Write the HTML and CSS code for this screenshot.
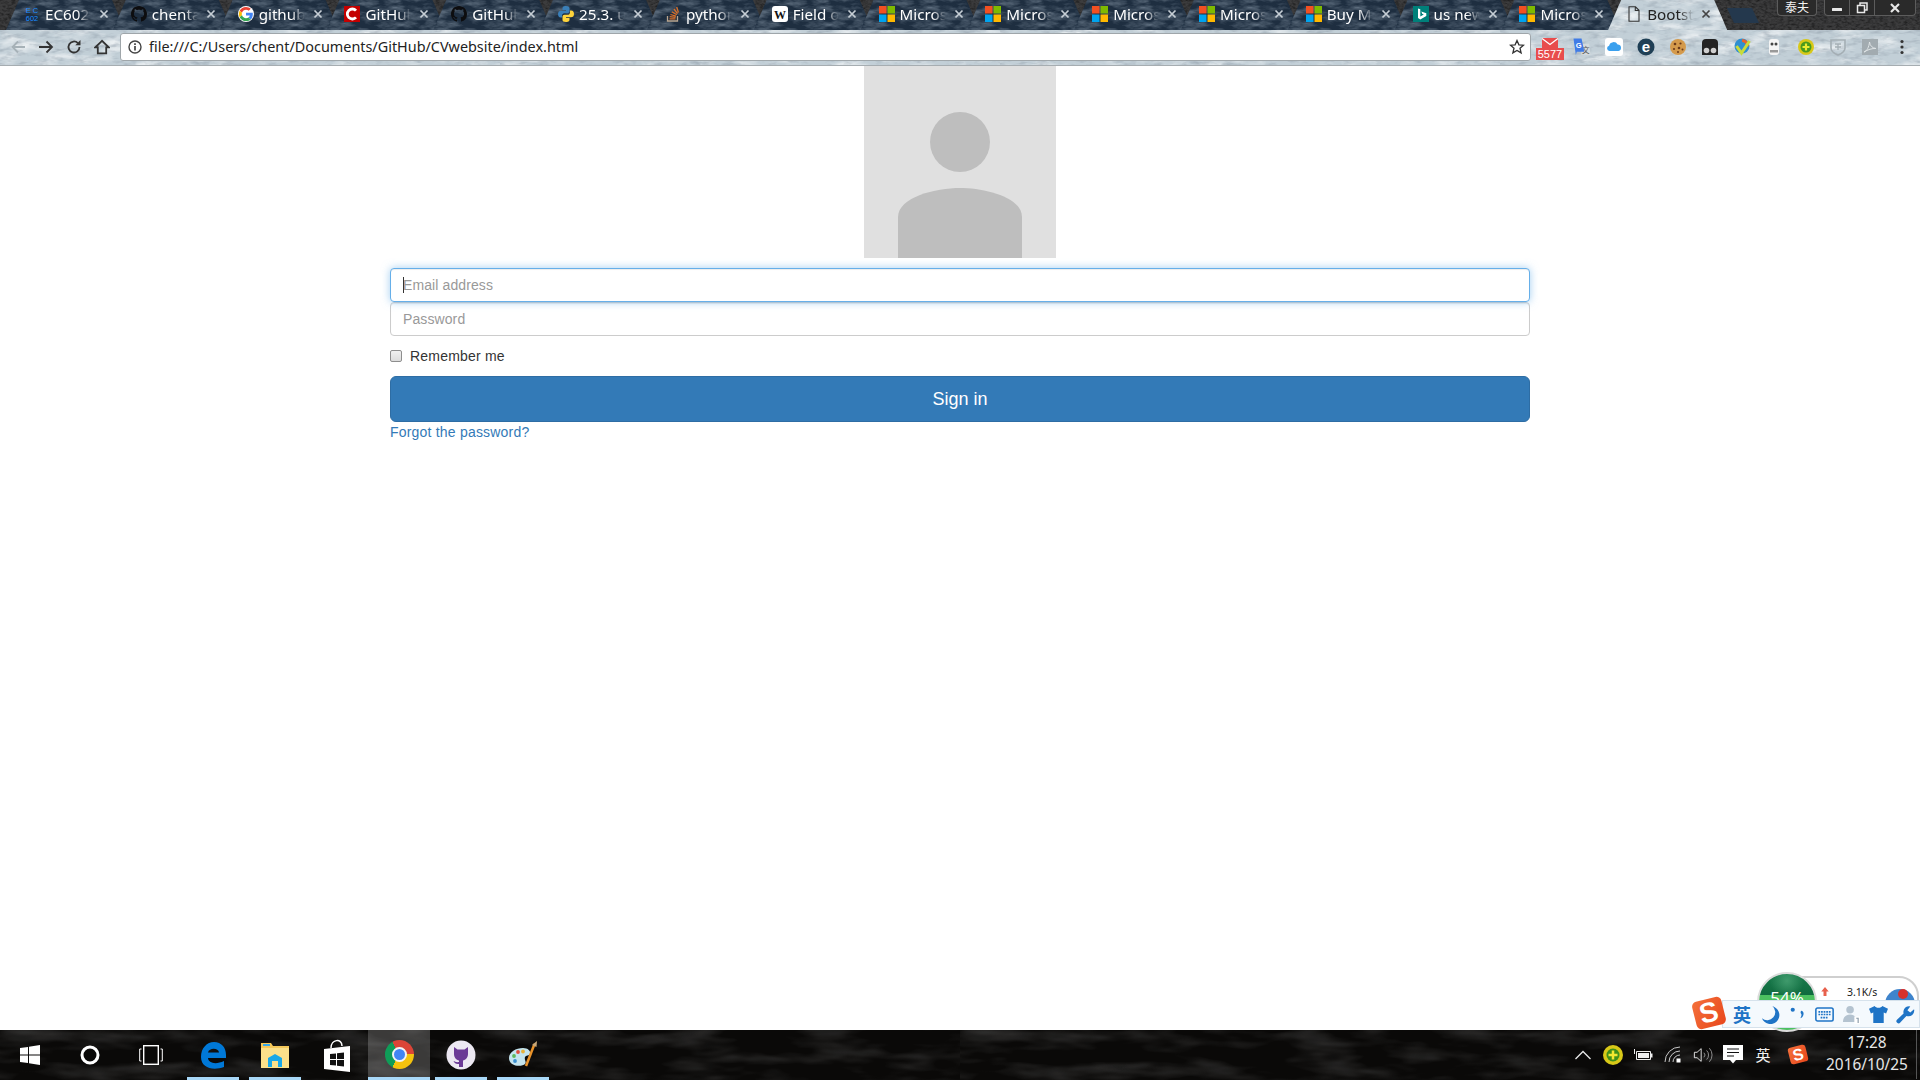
FILE: index.html
```html
<!DOCTYPE html>
<html lang="en">
<head>
<meta charset="utf-8">
<title>Bootstrap sign in</title>
<link rel="stylesheet" href="styles.css">
</head>
<body>
<svg class="sprite" xmlns="http://www.w3.org/2000/svg">
  <symbol id="ms" viewBox="0 0 16 16">
    <rect x="0" y="0" width="7.5" height="7.5" fill="#f25022"/><rect x="8.5" y="0" width="7.5" height="7.5" fill="#7fba00"/>
    <rect x="0" y="8.5" width="7.5" height="7.5" fill="#00a4ef"/><rect x="8.5" y="8.5" width="7.5" height="7.5" fill="#ffb900"/>
  </symbol>
  <symbol id="gh" viewBox="0 0 16 16">
    <path fill="#0d0d0f" d="M8 0C3.58 0 0 3.58 0 8c0 3.54 2.29 6.53 5.47 7.59.4.07.55-.17.55-.38 0-.19-.01-.82-.01-1.49-2.01.37-2.53-.49-2.69-.94-.09-.23-.48-.94-.82-1.13-.28-.15-.68-.52-.01-.53.63-.01 1.08.58 1.23.82.72 1.21 1.87.87 2.33.66.07-.52.28-.87.51-1.07-1.78-.2-3.64-.89-3.64-3.95 0-.87.31-1.59.82-2.15-.08-.2-.36-1.02.08-2.12 0 0 .67-.21 2.2.82.64-.18 1.32-.27 2-.27.68 0 1.36.09 2 .27 1.53-1.04 2.2-.82 2.2-.82.44 1.1.16 1.92.08 2.12.51.56.82 1.27.82 2.15 0 3.07-1.87 3.75-3.65 3.95.29.25.54.73.54 1.48 0 1.07-.01 1.93-.01 2.2 0 .21.15.46.55.38A8.013 8.013 0 0016 8c0-4.42-3.58-8-8-8z"/>
  </symbol>
  <symbol id="x" viewBox="0 0 10 10">
    <path d="M1.5 1.5l7 7M8.5 1.5l-7 7" fill="none" stroke="currentColor" stroke-width="1.7"/>
  </symbol>
</svg>

<header class="browser">
  <div class="tabstrip">
    <div class="tab">
      <svg class="fav" viewBox="0 0 16 16"><text x="8" y="7" class="fav-ec">E C</text><text x="8" y="15" class="fav-ec">602</text></svg>
      <span class="tab-title">EC602</span><svg class="tab-close"><use href="#x"/></svg>
    </div>
    <div class="tab"><svg class="fav"><use href="#gh"/></svg><span class="tab-title">chenta</span><svg class="tab-close"><use href="#x"/></svg></div>
    <div class="tab">
      <svg class="fav" viewBox="-3 -3 54 54"><circle cx="24" cy="24" r="27" fill="#fff"/><path fill="#EA4335" d="M24 9.5c3.54 0 6.71 1.22 9.21 3.6l6.85-6.85C35.9 2.38 30.47 0 24 0 14.62 0 6.51 5.38 2.56 13.22l7.98 6.19C12.43 13.72 17.74 9.5 24 9.5z"/><path fill="#4285F4" d="M46.98 24.55c0-1.57-.15-3.09-.38-4.55H24v9.02h12.94c-.58 2.96-2.26 5.48-4.78 7.18l7.73 6c4.51-4.18 7.09-10.36 7.09-17.65z"/><path fill="#FBBC05" d="M10.53 28.59c-.48-1.45-.76-2.99-.76-4.59s.27-3.14.76-4.59l-7.98-6.19C.92 16.46 0 20.12 0 24c0 3.88.92 7.54 2.56 10.78l7.97-6.19z"/><path fill="#34A853" d="M24 48c6.48 0 11.93-2.13 16.02-5.81l-7.73-6c-2.15 1.45-4.92 2.3-8.29 2.3-6.26 0-11.57-4.22-13.47-9.91l-7.98 6.19C6.51 42.62 14.62 48 24 48z"/></svg>
      <span class="tab-title">github</span><svg class="tab-close"><use href="#x"/></svg>
    </div>
    <div class="tab">
      <svg class="fav" viewBox="0 0 16 16"><rect width="16" height="16" fill="#c40000"/><path d="M12 4.6A5 5 0 1 0 12 11.4" fill="none" stroke="#fff" stroke-width="2.8"/></svg>
      <span class="tab-title">GitHub</span><svg class="tab-close"><use href="#x"/></svg>
    </div>
    <div class="tab"><svg class="fav"><use href="#gh"/></svg><span class="tab-title">GitHub</span><svg class="tab-close"><use href="#x"/></svg></div>
    <div class="tab">
      <svg class="fav" viewBox="0 0 16 16"><path fill="#3a7fb8" d="M8 0C5 0 4.5 1.2 4.5 2.5V4H8v.7H3C1 4.7 0 6 0 8s1 3.5 2.7 3.5H4V9.6c0-1.4 1.1-2.4 2.4-2.4h3.2c1 0 1.9-.8 1.9-1.9V2.5C11.500 1 10.500 0 8 0z"/><path fill="#ffd43b" d="M8 16c3 0 3.500-1.200 3.500-2.500V12H8v-.7h5c2 0 3-1.300 3-3.300s-1-3.500-2.700-3.500H12v1.900c0 1.400-1.100 2.400-2.400 2.400H6.400c-1 0-1.900.8-1.900 1.900v3.300C4.500 15 5.500 16 8 16z"/></svg>
      <span class="tab-title">25.3. u</span><svg class="tab-close"><use href="#x"/></svg>
    </div>
    <div class="tab">
      <svg class="fav" viewBox="0 0 16 16"><path d="M2.500 10v5h10v-5" fill="none" stroke="#b9a58f" stroke-width="1.300"/><path d="M4.500 12.800h6M4.700 10.700l5.900.6M5.400 8.500l5.600 1.700M6.800 5.800l5 3M9 3l3.500 4.600M11.700 1l1.700 5.500" fill="none" stroke="#d9702a" stroke-width="1.300"/></svg>
      <span class="tab-title">python</span><svg class="tab-close"><use href="#x"/></svg>
    </div>
    <div class="tab">
      <svg class="fav" viewBox="0 0 16 16"><rect width="16" height="16" rx="3" fill="#fff"/><text x="8" y="12.500" class="fav-w">W</text></svg>
      <span class="tab-title">Field o</span><svg class="tab-close"><use href="#x"/></svg>
    </div>
    <div class="tab"><svg class="fav"><use href="#ms"/></svg><span class="tab-title">Micros</span><svg class="tab-close"><use href="#x"/></svg></div>
    <div class="tab"><svg class="fav"><use href="#ms"/></svg><span class="tab-title">Micros</span><svg class="tab-close"><use href="#x"/></svg></div>
    <div class="tab"><svg class="fav"><use href="#ms"/></svg><span class="tab-title">Micros</span><svg class="tab-close"><use href="#x"/></svg></div>
    <div class="tab"><svg class="fav"><use href="#ms"/></svg><span class="tab-title">Micros</span><svg class="tab-close"><use href="#x"/></svg></div>
    <div class="tab"><svg class="fav"><use href="#ms"/></svg><span class="tab-title">Buy M</span><svg class="tab-close"><use href="#x"/></svg></div>
    <div class="tab">
      <svg class="fav" viewBox="0 0 16 16"><rect width="16" height="16" fill="#00807a"/><path d="M5 2.500l2.300.8v7.200l3.500-2-1.600-.8-.9-2.200 5 1.800v2.700l-6 3.500L5 12z" fill="#fff"/></svg>
      <span class="tab-title">us new</span><svg class="tab-close"><use href="#x"/></svg>
    </div>
    <div class="tab"><svg class="fav"><use href="#ms"/></svg><span class="tab-title">Micros</span><svg class="tab-close"><use href="#x"/></svg></div>
    <div class="tab tab-active">
      <svg class="fav" viewBox="0 0 16 16"><path d="M3 .8h6.500L13 4.300v10.900H3z M9.300 .8v3.700H13" fill="none" stroke="#333" stroke-width="1.100"/></svg>
      <span class="tab-title">Bootst</span><svg class="tab-close"><use href="#x"/></svg>
    </div>
    <div class="newtab"></div>
    <div class="captions">
      <div class="cap-name">泰夫</div>
      <div class="cap-group">
        <div class="cap-btn"><svg class="cap-icon" viewBox="0 0 12 12"><rect x="1" y="6" width="10" height="3" rx=".5" fill="#e8e8e8"/></svg></div>
        <div class="cap-btn"><svg class="cap-icon" viewBox="0 0 12 12"><path d="M4 3V1h7v7H9M1.500 3.500h7v7h-7z" fill="none" stroke="#e8e8e8" stroke-width="1.500"/></svg></div>
        <div class="cap-btn cap-wide"><svg class="cap-icon" viewBox="0 0 12 12"><path d="M2 2l8 8M10 2l-8 8" fill="none" stroke="#e8e8e8" stroke-width="2.200"/></svg></div>
      </div>
    </div>
  </div>

  <div class="toolbar">
    <div class="nav">
      <svg class="nav-icon nav-off" viewBox="0 0 16 16"><path d="M15 8H2M8 2.500L2.500 8 8 13.500"/></svg>
      <svg class="nav-icon" viewBox="0 0 16 16"><path d="M1 8h13M8.500 2.500L14 8l-5.500 5.500"/></svg>
      <svg class="nav-icon" viewBox="0 0 16 16"><path d="M13.500 8a5.500 5.500 0 1 1-1.600-3.900"/><path class="nav-fill" d="M14.500 1v5.200H9.300z"/></svg>
      <svg class="nav-icon" viewBox="0 0 16 16"><path d="M8 1.800L1.300 8.300h2.500v6h8.400v-6h2.500z"/></svg>
    </div>
    <div class="omnibox">
      <svg class="omni-info" viewBox="0 0 14 14"><circle cx="7" cy="7" r="6" fill="none" stroke="#444" stroke-width="1.400"/><path d="M7 6v4.500M7 3.300v1.600" stroke="#444" stroke-width="1.700"/></svg>
      <span class="omni-url">file:///C:/Users/chent/Documents/GitHub/CVwebsite/index.html</span>
      <svg class="omni-star" viewBox="0 0 16 16"><path d="M8 1.500l1.900 4.300 4.600.4-3.500 3 1.100 4.600L8 11.400l-4.100 2.400L5 9.200l-3.500-3 4.600-.4z" fill="none" stroke="#333" stroke-width="1.300"/></svg>
    </div>
    <div class="exts">
      <div class="ext">
        <svg class="ext-mail" viewBox="0 0 16 10"><rect width="16" height="10" fill="#e84c4c"/><path d="M0 .5l8 6 8-6" fill="none" stroke="#fff" stroke-width="1.300"/></svg>
        <span class="ext-badge">5577</span>
      </div>
      <div class="ext"><svg class="ext-icon" viewBox="0 0 19 19"><path d="M8 6h9l1.500 12H9z" fill="#d4dadd"/><text x="13.500" y="15.500" class="ext-tr">文</text><path d="M.5 .5h8.500l3 14H4l-1 3.500z" fill="#3f7be6"/><text x="6" y="11" class="ext-g">G</text></svg></div>
      <div class="ext"><svg class="ext-icon" viewBox="0 0 18 18"><rect width="18" height="18" rx="3" fill="#fff"/><path d="M4.500 13a2.700 2.700 0 0 1-.4-5.300A4.600 4.600 0 0 1 12.600 6.500 3.300 3.300 0 0 1 13.500 13z" fill="#3aa0ee"/></svg></div>
      <div class="ext"><svg class="ext-icon" viewBox="0 0 18 18"><circle cx="9" cy="9" r="8.500" fill="#1f3f55"/><text x="9" y="14" class="ext-e">e</text></svg></div>
      <div class="ext"><svg class="ext-icon" viewBox="0 0 18 18"><circle cx="9" cy="9" r="8" fill="#d49a4c"/><circle cx="6" cy="6" r="1.300" fill="#6b3a1a"/><circle cx="11.500" cy="5.500" r="1.100" fill="#6b3a1a"/><circle cx="5" cy="11" r="1.100" fill="#6b3a1a"/><circle cx="10" cy="10" r="1.300" fill="#6b3a1a"/><circle cx="13.500" cy="11.500" r="1" fill="#6b3a1a"/><circle cx="9" cy="14" r="1" fill="#6b3a1a"/></svg></div>
      <div class="ext"><svg class="ext-icon" viewBox="0 0 18 18"><path d="M1 17V5a4 4 0 0 1 4-4h8a4 4 0 0 1 4 4v12z" fill="#232323"/><circle cx="5.500" cy="12.500" r="2.800" fill="#cfcfcf"/><circle cx="12.500" cy="12.500" r="2.800" fill="#cfcfcf"/></svg></div>
      <div class="ext"><svg class="ext-icon" viewBox="0 0 18 18"><circle cx="9" cy="8" r="7.500" fill="#2f8fd0"/><path d="M9 1a7 7 0 0 1 7 7l-3 1a4 4 0 0 0-4-5z" fill="#e8632c"/><path d="M3.500 8l5 7 8-12" fill="none" stroke="#c9dc3a" stroke-width="3"/></svg></div>
      <div class="ext"><svg class="ext-icon" viewBox="0 0 18 18"><rect x="4" y="1" width="10" height="16" rx="3" fill="#f4f4f4"/><circle cx="7" cy="6" r="1.500" fill="#444"/><circle cx="11" cy="6" r="1.500" fill="#444"/><rect x="5" y="12" width="8" height="2.500" fill="#999"/></svg></div>
      <div class="ext"><svg class="ext-icon" viewBox="0 0 18 18"><circle cx="9" cy="9" r="8" fill="#d8c818"/><circle cx="9" cy="9" r="5.500" fill="#4a9a1e"/><path d="M9 5.500v7M5.500 9h7" stroke="#ecec30" stroke-width="2.200"/></svg></div>
      <div class="ext"><svg class="ext-icon" viewBox="0 0 18 18"><path d="M2 2h14v8c0 3-3 5.500-7 7-4-1.500-7-4-7-7z" fill="none" stroke="#a4aeb4" stroke-width="1.600"/><path d="M6 6h6M6 9h6M9 6v6" stroke="#a4aeb4" stroke-width="1.300"/></svg></div>
      <div class="ext"><svg class="ext-icon" viewBox="0 0 18 18"><rect x="1" y="1" width="16" height="16" fill="#a2abb0"/><path d="M3 14c3-1 5-5 5.500-10 .5 4 3 6 6.500 6.500-4-.2-8 1-12 3.500z" fill="none" stroke="#dfe4e6" stroke-width="1"/></svg></div>
      <div class="ext"><svg class="ext-dots" viewBox="0 0 4 16"><circle cx="2" cy="2.500" r="1.600"/><circle cx="2" cy="8" r="1.600"/><circle cx="2" cy="13.500" r="1.600"/></svg></div>
    </div>
  </div>
</header>

<main class="page">
  <svg class="avatar" viewBox="0 0 192 192">
    <rect width="192" height="192" fill="#e0e0e0"/>
    <circle cx="96" cy="76" r="30" fill="#bebebe"/>
    <path d="M34 192V151C34 131 72 122 96 122s62 9 62 29v41z" fill="#bebebe"/>
  </svg>
  <form class="signin">
    <div class="field">
      <input class="form-input form-input-focus" type="email" placeholder="Email address">
      <span class="caret"></span>
    </div>
    <input class="form-input" type="password" placeholder="Password">
    <label class="remember"><input class="check" type="checkbox"><span>Remember me</span></label>
    <button class="submit" type="button">Sign in</button>
    <a class="forgot" href="#">Forgot the password?</a>
  </form>
</main>

<div class="floaters">
  <div class="meter-pill">
    <svg class="meter-arrow" viewBox="0 0 10 12"><path d="M5 0l5 6H7v6H3V6H0z" fill="#e8604c"/></svg>
    <span class="meter-speed">3.1K/s</span>
    <div class="meter-ball"></div>
    <div class="meter-dot"></div>
  </div>
  <div class="meter-globe"><span class="meter-pct">54%</span></div>
  <div class="ime">
    <span class="ime-word">英</span>
    <svg class="ime-icon" viewBox="0 0 20 20"><path d="M12 1a8.500 8.500 0 0 1-11 13A9.500 9.500 0 1 0 14 2z" fill="#1f74c6"/></svg>
    <svg class="ime-icon" viewBox="0 0 20 20"><circle cx="5" cy="5" r="2.200" fill="#1f74c6"/><path d="M14 6c2 .5 3 2 2 5-.5 1.500-1.500 2.500-3 3 1-2 1.500-3 1-4.500-1-.5-1-3 0-3.500z" fill="#1f74c6"/></svg>
    <svg class="ime-icon" viewBox="0 0 22 20"><rect x="1" y="2.500" width="20" height="15" rx="2" fill="none" stroke="#1f74c6" stroke-width="1.800"/><path d="M4 7h14M4 10h14M6.500 13.500h9" stroke="#1f74c6" stroke-width="2" stroke-dasharray="2 1"/></svg>
    <svg class="ime-icon" viewBox="0 0 20 20"><circle cx="8.500" cy="5" r="4" fill="#b4c3d0"/><path d="M1 18c0-5 3-8 7.500-8s7.500 3 7.500 8z" fill="#b4c3d0"/><rect x="13" y="12" width="6" height="8" fill="#fff"/><path d="M15 14h2v5" fill="none" stroke="#8a9aa8" stroke-width="1.200"/></svg>
    <svg class="ime-icon" viewBox="0 0 20 20"><path d="M6 1L0 4l2 5 2.500-1v11h11V8L18 9l2-5-6-3c-1 2.500-7 2.500-8 0z" fill="#1f74c6"/></svg>
    <svg class="ime-icon" viewBox="0 0 20 20"><path d="M19 4.500l-4 3.500-3-2.500 3-4a6 6 0 0 0-7 7.500L1 15.500a2.300 2.300 0 0 0 3.500 3l6.500-7a6 6 0 0 0 8-7z" fill="#1f74c6"/></svg>
  </div>
  <div class="sogou sogou-big"><span class="sogou-s">S</span></div>
</div>

<footer class="taskbar">
  <div class="sys-btn"><svg class="win-logo" viewBox="0 0 20 20"><path fill="#fff" d="M0 3l8-1.100v7.600H0zM9 1.700L20 0v9.500H9zM0 10.500h8v7.600L0 17zM9 10.500h11V20L9 18.300z"/></svg></div>
  <div class="sys-btn"><svg class="cortana" viewBox="0 0 20 20"><circle cx="10" cy="10" r="8" fill="none" stroke="#fff" stroke-width="3"/></svg></div>
  <div class="sys-btn"><svg class="taskview" viewBox="0 0 24 20"><rect x="4.700" y=".7" width="14.600" height="18.600" fill="none" stroke="#fff" stroke-width="1.400"/><path d="M2.500 4H.7v12h1.800M21.500 4h1.800v12h-1.800" fill="none" stroke="#fff" stroke-width="1"/></svg></div>

  <div class="pin pin-open"><svg class="pin-icon" viewBox="0 0 30 30"><path d="M3 17C3 8 9 2 16 2c7.500 0 12 5.500 12 13v3H10c.5 5 7.500 7 16 3v6c-11 4-23 1-23-10zM10 12.500h11c-.5-5-10-5-11 0z" fill="#0078d7"/></svg><span class="pin-bar"></span></div>
  <div class="pin pin-open"><svg class="pin-icon" viewBox="0 0 30 30"><path d="M1 3h10l2 3h16v22H1z" fill="#f5c85a"/><path d="M1 8h28v20H1z" fill="#fbe08a"/><rect x="3" y="4" width="7" height="2" fill="#38a8e8"/><path d="M8 27V18l7-4 7 4v9h-4v-6h-6v6z" fill="#19a8e8"/></svg><span class="pin-bar"></span></div>
  <div class="pin"><svg class="pin-icon pin-store" viewBox="0 0 30 34"><path d="M2 11l26-3v26L2 31z" fill="#fff"/><path d="M9 10C9 1 20 0 20 8" fill="none" stroke="#fff" stroke-width="1.500"/><path d="M8 16l6-.6v5.600H8zM15 15.300l7-.7V21h-7zM8 22h6v5.500l-6-.6zM15 22h7v6.500l-7-.7z" fill="#111"/></svg></div>
  <div class="pin pin-active"><div class="chrome-logo"><span class="chrome-core"></span></div><span class="pin-bar"></span></div>
  <div class="pin pin-open"><svg class="pin-icon" viewBox="0 0 30 30"><circle cx="15" cy="15" r="14.500" fill="#ece8f2"/><path d="M8 7l3.500 2.500h7L22 7v7c0 3.500-2.500 6-5 6.500V27h-4v-3c-3 .5-4.500-1-5.500-3 1.500 .5 2.500 1.500 5.500 1v-1.500C10.500 20 8 17.500 8 14z" fill="#6b3a96"/></svg><span class="pin-bar"></span></div>
  <div class="pin pin-open"><svg class="pin-icon" viewBox="0 0 30 30"><path d="M1 18c0-6 7-10 14-10 5 0 8 3 7 6-1 2-4 1-5 3-1 3 2 5 0 7-3 3-16 3-16-6z" fill="#c4e4ee"/><circle cx="6" cy="16" r="1.900" fill="#5cb85c"/><circle cx="10" cy="12" r="1.900" fill="#e04c3c"/><circle cx="15" cy="11.500" r="1.900" fill="#e8b23a"/><circle cx="7" cy="21" r="1.900" fill="#3a8fd0"/><path d="M26.500 4L18 26" stroke="#e8922a" stroke-width="2.500"/><path d="M24 5l5-4-.5 6z" fill="#c9a878"/></svg><span class="pin-bar"></span></div>

  <div class="tray">
    <div class="tray-cell"><svg class="tray-icon" viewBox="0 0 18 18"><path d="M1.500 13L9 5.500 16.500 13" fill="none" stroke="#e8e8e8" stroke-width="1.300"/></svg></div>
    <div class="tray-cell"><svg class="tray-ball" viewBox="0 0 20 20"><circle cx="10" cy="10" r="10" fill="#d8c818"/><circle cx="10" cy="10" r="6.500" fill="#3f8f1a"/><path d="M10 5.500v9M5.500 10h9" stroke="#f2e830" stroke-width="2.500"/></svg></div>
    <div class="tray-cell"><svg class="tray-icon tray-batt" viewBox="0 0 20 14"><path d="M3.500 3.500h14v8h-14zM1.500 1v5" fill="none" stroke="#eee" stroke-width="1"/><rect x="5" y="5" width="11" height="5" fill="#eee"/><rect x="18" y="5.500" width="1.500" height="4" fill="#eee"/></svg></div>
    <div class="tray-cell"><svg class="tray-icon" viewBox="0 0 18 18"><path d="M1 16A15 15 0 0 1 16 1M5 16A11 11 0 0 1 16 5M9 16a7 7 0 0 1 7-7" fill="none" stroke="#c8c8c8" stroke-width="1"/><rect x="12.500" y="12.500" width="4" height="4" fill="#fff"/></svg></div>
    <div class="tray-cell"><svg class="tray-icon" viewBox="0 0 22 18"><path d="M1.500 6h3l4.500-4v14l-4.500-4h-3z" fill="none" stroke="#eee" stroke-width="1"/><path d="M12 6.500a3.500 3.500 0 0 1 0 5M15 4a7 7 0 0 1 0 10M18 1.500a11 11 0 0 1 0 15" fill="none" stroke="#999" stroke-width="1"/></svg></div>
    <div class="tray-cell"><svg class="tray-note" viewBox="0 0 20 20"><path d="M0 0h20v15h-7l-3 3.500L7 15H0z" fill="#fff"/><path d="M4 4h12M4 7.500h12M4 11h7" stroke="#111" stroke-width="1.200"/></svg></div>
    <div class="tray-cell tray-word">英</div>
    <div class="tray-cell tray-wide"><div class="sogou sogou-small"><span class="sogou-s">S</span></div></div>
    <div class="clock"><span class="clock-time">17:28</span><span class="clock-date">2016/10/25</span></div>
    <div class="show-desktop"></div>
  </div>
</footer>
</body>
</html>
```
FILE: styles.css
```css
:root {
  --ice: url("data:image/svg+xml,%3Csvg xmlns='http://www.w3.org/2000/svg' width='700' height='80'%3E%3Cfilter id='n'%3E%3CfeTurbulence type='fractalNoise' baseFrequency='.03 .09' numOctaves='4' seed='3'/%3E%3CfeColorMatrix values='0 0 0 0 1 0 0 0 0 1 0 0 0 0 1 1.800 0 0 0 -.85'/%3E%3C/filter%3E%3Crect width='100%25' height='100%25' filter='url(%23n)'/%3E%3C/svg%3E");
  --ice-dark: url("data:image/svg+xml,%3Csvg xmlns='http://www.w3.org/2000/svg' width='500' height='60'%3E%3Cfilter id='m'%3E%3CfeTurbulence type='fractalNoise' baseFrequency='.08 .22' numOctaves='3' seed='11'/%3E%3CfeColorMatrix values='0 0 0 0 .3 0 0 0 0 .36 0 0 0 0 .42 1.500 0 0 0 -.72'/%3E%3C/filter%3E%3Crect width='100%25' height='100%25' filter='url(%23m)'/%3E%3C/svg%3E");
}

* { box-sizing: border-box; }

html, body { height: 100%; }

body {
  margin: 0;
  height: 1080px;
  overflow: hidden;
  display: flex;
  flex-direction: column;
  position: relative;
  background: #fff;
  font-family: "Liberation Sans", Arial, sans-serif;
  font-size: 14px;
  color: #333;
}

.sprite { display: none; }

/* ---------- browser frame ---------- */
.browser { flex: none; }

.tabstrip {
  height: 30px;
  padding-left: 6px;
  display: flex;
  align-items: stretch;
  position: relative;
  background-color: #3c3c3d;
  background-image: url("data:image/svg+xml,%3Csvg xmlns='http://www.w3.org/2000/svg' width='400' height='60'%3E%3Cfilter id='n'%3E%3CfeTurbulence type='fractalNoise' baseFrequency='.25 .5' numOctaves='2' seed='4'/%3E%3CfeColorMatrix values='0 0 0 0 0 0 0 0 0 0 0 0 0 0 0 1 0 0 0 -.38'/%3E%3C/filter%3E%3Crect width='100%25' height='100%25' filter='url(%23n)'/%3E%3C/svg%3E");
}

.tab {
  flex: none;
  width: 119px;
  margin-right: -12.2px;
  padding-left: 18px;
  padding-bottom: 2px;
  display: flex;
  align-items: center;
  color: #fff;
  clip-path: polygon(0 100%, 13px 0, calc(100% - 13px) 0, 100% 100%);
  background-color: #1e2e40;
  background-image: url("data:image/svg+xml,%3Csvg xmlns='http://www.w3.org/2000/svg' width='300' height='60'%3E%3Cfilter id='n'%3E%3CfeTurbulence type='fractalNoise' baseFrequency='.05 .14' numOctaves='4' seed='7'/%3E%3CfeColorMatrix values='0 0 0 0 .55 0 0 0 0 .65 0 0 0 0 .75 1 0 0 0 -.42'/%3E%3C/filter%3E%3Crect width='100%25' height='100%25' filter='url(%23n)'/%3E%3C/svg%3E");
}

.fav { flex: none; width: 16px; height: 16px; }

.fav-ec {
  font: 7.500px "Liberation Sans", sans-serif;
  fill: #1a8cff;
  text-anchor: middle;
}

.fav-w {
  font: bold 12px "Liberation Serif", serif;
  fill: #111;
  text-anchor: middle;
}

.tab-title {
  flex: none;
  width: 46px;
  margin-left: 5px;
  white-space: nowrap;
  font: 15.200px/20px "Noto Sans", sans-serif;
  -webkit-mask-image: linear-gradient(to right, #000 70%, transparent 100%);
  mask-image: linear-gradient(to right, #000 70%, transparent 100%);
}

.tab-close {
  flex: none;
  width: 10px;
  height: 10px;
  margin-left: 8px;
  color: #c6ced5;
}

.tab-active {
  position: relative;
  z-index: 1;
  color: #222;
  background-color: #c2cfd7;
  background-image: var(--ice-dark), var(--ice);
}

.tab-active .tab-close { color: #444; }

.newtab {
  flex: none;
  align-self: flex-start;
  width: 32px;
  height: 15px;
  margin: 8px 0 0 12px;
  background: #24384d;
  clip-path: polygon(0 0, 78% 0, 100% 100%, 22% 100%);
}

.captions {
  position: absolute;
  top: 0;
  right: 4px;
  display: flex;
  gap: 7px;
}

.cap-name {
  width: 40px;
  height: 16px;
  border: 1px solid #5c5c5c;
  border-top: 0;
  border-radius: 0 0 4px 4px;
  background: #2a2a2a;
  color: #f2f2f2;
  font: 12px/14px "Noto Sans CJK SC", sans-serif;
  text-align: center;
}

.cap-group {
  width: 92px;
  height: 16px;
  display: flex;
  border: 1px solid #5c5c5c;
  border-top: 0;
  border-radius: 0 0 4px 4px;
  background: #2a2a2a;
}

.cap-btn {
  flex: 0 0 25px;
  display: flex;
  align-items: center;
  justify-content: center;
  border-right: 1px solid #5c5c5c;
}

.cap-wide { flex: 1; border-right: 0; }

.cap-icon { width: 12px; height: 12px; }

.toolbar {
  height: 36px;
  padding-bottom: 2px;
  display: flex;
  align-items: center;
  border-bottom: 1px solid #a6adb1;
  background-color: #c2cfd7;
  background-image: var(--ice-dark), var(--ice);
}

.nav {
  flex: none;
  width: 120px;
  padding-left: 10px;
  display: flex;
  align-items: center;
  gap: 12px;
}

.nav-icon {
  flex: none;
  width: 16px;
  height: 16px;
  fill: none;
  stroke: #333;
  stroke-width: 1.800;
}

.nav-off { stroke: #a6b1b7; }

.nav-fill { fill: #333; stroke: none; }

.omnibox {
  flex: none;
  width: 1411px;
  height: 28px;
  padding: 0 5px 0 7px;
  display: flex;
  align-items: center;
  background: #fff;
  border: 1px solid #9fa6aa;
  border-radius: 3px;
}

.omni-info { flex: none; width: 14px; height: 14px; }

.omni-url {
  flex: 1;
  margin-left: 7px;
  color: #222;
  white-space: nowrap;
  font: 14.400px/20px "Noto Sans", sans-serif;
}

.omni-star { flex: none; width: 16px; height: 16px; }

.exts {
  flex: none;
  padding-left: 3px;
  display: flex;
}

.ext {
  flex: 0 0 32px;
  height: 28px;
  position: relative;
  display: flex;
  align-items: center;
  justify-content: center;
}

.ext-icon { width: 18px; height: 18px; }

.ext-mail {
  position: absolute;
  left: 8px;
  top: 5px;
  width: 16px;
  height: 10px;
}

.ext-badge {
  position: absolute;
  left: 2px;
  top: 15px;
  width: 28px;
  height: 12px;
  background: #e84c4c;
  color: #fff;
  font: 11px/12px "Liberation Sans", sans-serif;
  text-align: center;
}

.ext-tr { font: 8px "Noto Sans CJK SC", sans-serif; fill: #555; text-anchor: middle; }

.ext-g { font: bold 8px "Liberation Sans", sans-serif; fill: #fff; text-anchor: middle; }

.ext-e { font: bold 15px "Liberation Sans", sans-serif; fill: #fff; text-anchor: middle; }

.ext-dots { width: 4px; height: 16px; fill: #333; }

/* ---------- sign-in page ---------- */
.page {
  flex: 1;
  min-height: 0;
  width: 1140px;
  margin: 0 auto;
  display: flex;
  flex-direction: column;
}

.avatar {
  flex: none;
  display: block;
  width: 192px;
  height: 192px;
  margin: 0 auto;
}

.signin {
  margin-top: 10px;
  display: flex;
  flex-direction: column;
}

.field { position: relative; display: flex; }

.form-input {
  width: 100%;
  height: 34px;
  padding: 6px 12px;
  border: 1px solid #ccc;
  border-radius: 4px;
  background: #fff;
  color: #555;
  font: 14px/20px "Liberation Sans", Arial, sans-serif;
  letter-spacing: .1px;
  box-shadow: inset 0 1px 1px rgba(0, 0, 0, .075);
  outline: 0;
}

.form-input::placeholder { color: #999; opacity: 1; }

.form-input-focus {
  border-color: #66afe9;
  box-shadow: inset 0 1px 1px rgba(0, 0, 0, .075), 0 0 8px rgba(102, 175, 233, .6);
}

.caret {
  position: absolute;
  left: 13px;
  top: 9px;
  width: 1px;
  height: 16px;
  background: #333;
}

.remember {
  margin-top: 14px;
  display: flex;
  align-items: center;
  height: 12px;
  gap: 8px;
  color: #333;
  font-size: 14px;
  line-height: 20px;
  letter-spacing: .2px;
}

.check {
  appearance: none;
  -webkit-appearance: none;
  flex: none;
  width: 12px;
  height: 12px;
  margin: 0;
  border: 1px solid #8e8e8e;
  border-radius: 2px;
  background: linear-gradient(#f0f0f0, #dcdcdc);
}

.submit {
  margin-top: 14px;
  height: 46px;
  width: 100%;
  padding: 11px 16px 10px;
  border: 1px solid #2e6da4;
  border-radius: 6px;
  background: #337ab7;
  color: #fff;
  font: 18px/1.33 "Liberation Sans", Arial, sans-serif;
}

.forgot {
  align-self: flex-start;
  color: #337ab7;
  font-size: 14px;
  line-height: 20px;
  letter-spacing: .2px;
  text-decoration: none;
}

/* ---------- floating widgets over the page ---------- */
.floaters {
  position: absolute;
  right: 0;
  bottom: 50px;
  width: 230px;
  height: 60px;
}

.meter-pill {
  position: absolute;
  left: 92px;
  top: 6px;
  width: 137px;
  height: 40px;
  border: 2px solid #cfcfcf;
  border-radius: 20px 20px 0 0;
  background: #fff;
  overflow: hidden;
}

.meter-arrow {
  position: absolute;
  left: 37px;
  top: 9px;
  width: 8px;
  height: 9px;
}

.meter-speed {
  position: absolute;
  left: 63px;
  top: 6px;
  color: #222;
  font: 10.500px/16px "Noto Sans", sans-serif;
}

.meter-ball {
  position: absolute;
  left: 101px;
  top: 11px;
  width: 30px;
  height: 30px;
  border-radius: 50%;
  background: #3f84cc;
}

.meter-dot {
  position: absolute;
  left: 114px;
  top: 11px;
  width: 10px;
  height: 10px;
  border-radius: 50%;
  background: #d8322c;
}

.meter-globe {
  position: absolute;
  left: 67px;
  top: 2px;
  width: 60px;
  height: 60px;
  border-radius: 50%;
  border: 2px solid #dcdcdc;
  background: radial-gradient(circle at 50% 12%, #3f9a6c 0, transparent 30%), linear-gradient(#1a7a4c 0, #0f6a3e 38%, #4cc060 38%, #4cc060 100%);
  text-align: center;
  overflow: hidden;
}

.meter-pct {
  display: block;
  margin-top: 12px;
  color: #fff;
  font: 17px/24px "Noto Sans", sans-serif;
}

.ime {
  position: absolute;
  left: 32px;
  top: 30px;
  width: 198px;
  height: 28px;
  padding-left: 10px;
  display: flex;
  align-items: center;
  gap: 8px;
  background: #f4f9fd;
  border: 1px solid #d6e2ec;
}

.ime-word {
  flex: none;
  width: 20px;
  color: #1f74c6;
  font: bold 18px/20px "Noto Sans CJK SC", sans-serif;
}

.ime-icon { flex: none; width: 19px; height: 19px; }

.sogou {
  display: flex;
  align-items: center;
  justify-content: center;
  background: linear-gradient(135deg, #f4703a, #e8471c);
  transform: rotate(-14deg);
}

.sogou-big {
  position: absolute;
  left: 4px;
  top: 29px;
  width: 30px;
  height: 28px;
  border-radius: 5px;
}

.sogou-small {
  width: 18px;
  height: 17px;
  border-radius: 3px;
}

.sogou-s {
  color: #fff;
  font-family: "Liberation Sans", sans-serif;
  font-weight: bold;
}

.sogou-big .sogou-s { font-size: 28px; line-height: 28px; }

.sogou-small .sogou-s { font-size: 16px; line-height: 17px; }

/* ---------- taskbar ---------- */
.taskbar {
  flex: none;
  height: 50px;
  padding-bottom: 1px;
  display: flex;
  background-color: #0a0908;
  background-image: url("data:image/svg+xml,%3Csvg xmlns='http://www.w3.org/2000/svg' width='960' height='50'%3E%3Cfilter id='n'%3E%3CfeTurbulence type='fractalNoise' baseFrequency='.015 .06' numOctaves='3' seed='5'/%3E%3CfeColorMatrix values='0 0 0 0 .25 0 0 0 0 .25 0 0 0 0 .25 .6 0 0 0 -.27'/%3E%3C/filter%3E%3Crect width='100%25' height='100%25' filter='url(%23n)'/%3E%3C/svg%3E");
}

.sys-btn {
  flex: 0 0 60px;
  display: flex;
  align-items: center;
  justify-content: center;
}

.sys-btn:nth-child(3) { flex-basis: 62px; }

.win-logo { width: 20px; height: 20px; }

.cortana { width: 20px; height: 20px; }

.taskview { width: 24px; height: 20px; }

.pin {
  flex: 0 0 62px;
  position: relative;
  display: flex;
  align-items: center;
  justify-content: center;
}

.pin-icon { width: 30px; height: 30px; }

.pin-store { height: 34px; }

.pin-bar {
  position: absolute;
  left: 5px;
  right: 5px;
  bottom: -1px;
  height: 3px;
  background: #a8d8f8;
}

.pin-active { background: rgba(255, 255, 255, .2); }

.pin-active .pin-bar { left: 0; right: 0; }

.chrome-logo {
  width: 29px;
  height: 29px;
  border-radius: 50%;
  display: flex;
  align-items: center;
  justify-content: center;
  background: conic-gradient(#db4437 0 90deg, #f4c20d 90deg 210deg, #0f9d58 210deg 330deg, #db4437 330deg 360deg);
}

.chrome-core {
  width: 15px;
  height: 15px;
  border-radius: 50%;
  background: #4285f4;
  border: 2px solid #f4f4f4;
}

.tray {
  margin-left: auto;
  display: flex;
  align-items: center;
  color: #f2f2f2;
}

.tray-cell {
  flex: 0 0 30px;
  display: flex;
  align-items: center;
  justify-content: center;
}

.tray-wide { flex-basis: 40px; }

.tray-icon { width: 20px; height: 18px; }

.tray-batt { width: 20px; height: 14px; }

.tray-ball { width: 20px; height: 20px; }

.tray-note { width: 20px; height: 20px; }

.tray-word { font: 15px/20px "Noto Sans CJK SC", sans-serif; }

.clock {
  flex: 0 0 98px;
  display: flex;
  flex-direction: column;
  align-items: center;
  font-family: "Noto Sans", sans-serif;
  font-size: 15.400px;
  line-height: 22px;
  color: #e6e6e6;
  transform: translateY(-1px);
}

.clock-time { display: block; }

.clock-date { display: block; }

.show-desktop {
  flex: 0 0 4px;
  align-self: stretch;
  border-left: 1px solid #555;
}
```
